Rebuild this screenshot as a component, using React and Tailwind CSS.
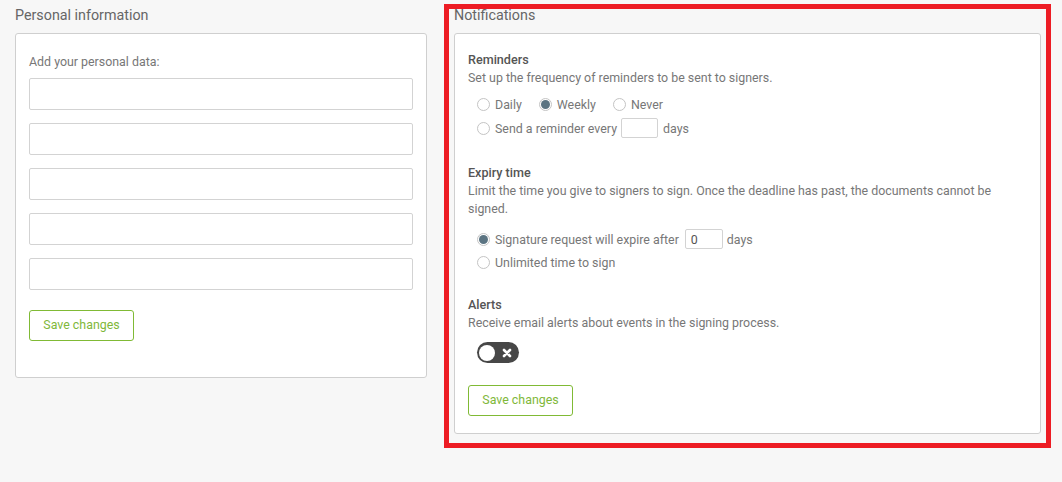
import React from 'react';

const font = { fontFamily: 'Roboto, "Noto Sans", Arial, sans-serif' };

function Radio({ checked, label, children }) {
  return (
    <label className="flex items-center text-[12.4px] leading-[17px] text-[#777]">
      <span className="w-[13px] h-[13px] rounded-full border border-[#c4c4c4] bg-white flex items-center justify-center mr-[5px] shrink-0">
        {checked && <span className="w-[9px] h-[9px] rounded-full bg-[#5b7482]" />}
      </span>
      <span>{label}</span>
      {children}
    </label>
  );
}

function SmallInput({ value, className }) {
  return (
    <span className={`inline-flex items-center h-[20px] border border-[#d3d3d3] rounded-[2px] bg-white text-[12.4px] text-[#555] px-[5px] ${className}`}>
      {value}
    </span>
  );
}

function SaveButton() {
  return (
    <button className="w-[105px] h-[31px] border border-[#80ba35] rounded-[3px] bg-white text-[12.4px] text-[#7fb83a]">
      Save changes
    </button>
  );
}

export default function App() {
  return (
    <div className="relative w-[1062px] h-[482px] bg-[#f7f7f7] overflow-hidden" style={font}>
      <div className="flex gap-[27px] pl-[15px] pt-[5px]">
        <section className="w-[412px]">
          <h2 className="h-[20px] leading-[20px] text-[14.3px] text-[#666] mb-[8px]">Personal information</h2>
          <div className="bg-white border border-[#cfcfcf] rounded-[3px] px-[13px] pt-[19px] pb-[36px]">
            <p className="text-[12.4px] leading-[17px] text-[#777] mb-[8px]">Add your personal data:</p>
            <div className="flex flex-col gap-[13px]">
              {[0, 1, 2, 3, 4].map((i) => (
                <div key={i} className="h-[32px] border border-[#d3d3d3] rounded-[2px] bg-white" />
              ))}
            </div>
            <div className="mt-[20px]">
              <SaveButton />
            </div>
          </div>
        </section>

        <section className="w-[587px]">
          <h2 className="h-[20px] leading-[20px] text-[14.3px] text-[#666] mb-[8px]">Notifications</h2>
          <div className="bg-white border border-[#cfcfcf] rounded-[3px] px-[13px] pt-[16px] pb-[17px]">
            <h3 className="text-[12.6px] leading-[19px] font-medium text-[#555]">Reminders</h3>
            <p className="text-[12.4px] leading-[17px] text-[#777]">Set up the frequency of reminders to be sent to signers.</p>
            <div className="pl-[9px] mt-[7px]">
              <div className="flex items-center h-[23px] gap-[17px]">
                <Radio label="Daily" />
                <Radio label="Weekly" checked />
                <Radio label="Never" />
              </div>
              <div className="flex items-center h-[24px]">
                <Radio label="Send a reminder every">
                  <SmallInput className="w-[37px] ml-[4px] mr-[5px]" />
                  <span>days</span>
                </Radio>
              </div>
            </div>

            <h3 className="text-[12.6px] leading-[19px] font-medium text-[#555] mt-[23px]">Expiry time</h3>
            <p className="text-[12.4px] leading-[18px] text-[#777] max-w-[550px]">
              Limit the time you give to signers to sign. Once the deadline has past, the documents cannot be signed.
            </p>
            <div className="pl-[9px] mt-[9px]">
              <div className="flex items-center h-[24px]">
                <Radio label="Signature request will expire after" checked>
                  <SmallInput value="0" className="w-[38px] ml-[6px] mr-[4px]" />
                  <span>days</span>
                </Radio>
              </div>
              <div className="flex items-center h-[22px]">
                <Radio label="Unlimited time to sign" />
              </div>
            </div>

            <h3 className="text-[12.6px] leading-[19px] font-medium text-[#555] mt-[22px]">Alerts</h3>
            <p className="text-[12.4px] leading-[17px] text-[#777]">Receive email alerts about events in the signing process.</p>
            <div className="ml-[9px] mt-[11px] w-[42px] h-[21px] rounded-full bg-[#474747] flex items-center justify-between pl-[2px] pr-[7px]">
              <span className="w-[16px] h-[16px] rounded-full bg-white" />
              <svg width="10" height="10" viewBox="0 0 10 10">
                <path d="M2 2 L8 8 M8 2 L2 8" stroke="#fff" strokeWidth="2.6" strokeLinecap="round" />
              </svg>
            </div>
            <div className="mt-[22px]">
              <SaveButton />
            </div>
          </div>
        </section>
      </div>

      <div className="absolute left-[444px] top-[4px] w-[607px] h-[444px] border-[5px] border-[#ed1c24] pointer-events-none" />
    </div>
  );
}
